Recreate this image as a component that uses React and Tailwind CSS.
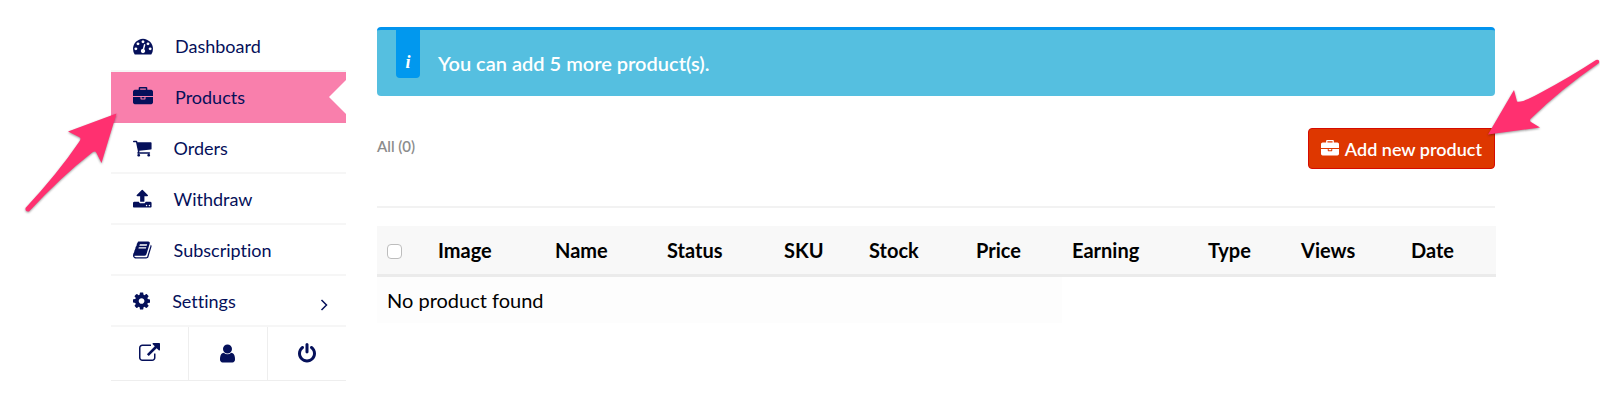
const ICONS = {
  dashboard: {
    viewBox: "0 0 1792 1792",
    d: "M384 1152q0-53-37.5-90.5t-90.5-37.5-90.5 37.5-37.5 90.5 37.5 90.5 90.5 37.5 90.5-37.5 37.5-90.5zm192-448q0-53-37.5-90.5t-90.5-37.5-90.5 37.5-37.5 90.5 37.5 90.5 90.5 37.5 90.5-37.5 37.5-90.5zm428 481l101-382q6-26-7.5-48.5t-38.5-29.5-48 6.5-30 39.5l-101 382q-60 5-107 43.5t-63 98.5q-20 77 20 146t117 89 146-20 89-117q16-60-6-117t-72-91zm660-33q0-53-37.5-90.5t-90.5-37.5-90.5 37.5-37.5 90.5 37.5 90.5 90.5 37.5 90.5-37.5 37.5-90.5zm-640-640q0-53-37.5-90.5t-90.5-37.5-90.5 37.5-37.5 90.5 37.5 90.5 90.5 37.5 90.5-37.5 37.5-90.5zm448 192q0-53-37.5-90.5t-90.5-37.5-90.5 37.5-37.5 90.5 37.5 90.5 90.5 37.5 90.5-37.5 37.5-90.5zm320 448q0 261-141 483-19 29-54 29h-1402q-35 0-54-29-141-221-141-483 0-182 71-348t191-286 286-191 348-71 348 71 286 191 191 286 71 348z",
  },
  briefcase: {
    viewBox: "0 0 1792 1792",
    d: "M640 256h512v-128h-512v128zm1152 640v480q0 66-47 113t-113 47h-1472q-66 0-113-47t-47-113v-480h672v160q0 26 19 45t45 19h320q26 0 45-19t19-45v-160h672zm-768 0v128h-256v-128h256zm768-480v384h-1792v-384q0-66 47-113t113-47h352v-160q0-40 28-68t68-28h576q40 0 68 28t28 68v160h352q66 0 113 47t47 113z",
  },
  cart: {
    viewBox: "64 0 1664 1792",
    d: "M704 1536q0 52-38 90t-90 38-90-38-38-90 38-90 90-38 90 38 38 90zm896 0q0 52-38 90t-90 38-90-38-38-90 38-90 90-38 90 38 38 90zm128-1088v512q0 24-16.5 42.5t-40.5 21.5l-1044 122q13 60 13 70 0 16-24 64h920q26 0 45 19t19 45-19 45-45 19h-1024q-26 0-45-19t-19-45q0-11 8-31.5t16-36 21.5-40 15.5-29.5l-177-823h-204q-26 0-45-19t-19-45 19-45 45-19h256q16 0 28.5 6.5t19.5 15.5 13 24.5 8 26 5.5 29.5 4.5 26h1201q26 0 45 19t19 45z",
  },
  upload: {
    viewBox: "64 0 1664 1792",
    d: "M1344 1472q0-26-19-45t-45-19-45 19-19 45 19 45 45 19 45-19 19-45zm256 0q0-26-19-45t-45-19-45 19-19 45 19 45 45 19 45-19 19-45zm128-224v320q0 40-28 68t-68 28h-1472q-40 0-68-28t-28-68v-320q0-40 28-68t68-28h427q21 56 70.5 92t110.5 36h256q61 0 110.5-36t70.5-92h427q40 0 68 28t28 68zm-325-648q-17 40-59 40h-256v448q0 26-19 45t-45 19h-256q-26 0-45-19t-19-45v-448h-256q-42 0-59-40-17-39 14-69l448-448q18-19 45-19t45 19l448 448q31 30 14 69z",
  },
  book: {
    viewBox: "64 0 1664 1792",
    d: "M1703 478q40 57 18 129l-275 906q-19 64-76.5 107.5t-122.5 43.5h-923q-77 0-148.5-53.5t-99.5-131.5q-24-67-2-127 0-4 3-27t4-37q1-8-3-21.5t-3-19.5q2-11 8-21t16.5-23.5 16.5-23.5q23-38 45-91.5t30-91.5q3-10 .5-30t-.5-28q3-11 17-28t17-23q21-36 42-92t25-90q1-9-2.5-32t.5-28q4-13 22-30.5t22-22.5q19-26 42.5-84.5t27.5-96.5q1-8-3-25.5t-2-26.5q2-8 9-18t18-23 17-21q8-12 16.5-30.5t15-35 16-36 19.5-32 26.5-23.5 36-11.5 47.5 5.5l-1 3q38-9 51-9h761q74 0 114 56t18 130l-274 906q-36 119-71.5 153.5t-128.5 34.5h-869q-27 0-38 15-11 16-1 43 24 70 144 70h923q29 0 56-15.5t35-41.5l300-987q7-22 5-57 38 15 59 43zm-1064 2q-4 13 2 22.5t20 9.5h608q13 0 25.5-9.5t16.5-22.5l21-64q4-13-2-22.5t-20-9.5h-608q-13 0-25.5 9.5t-16.5 22.5zm-83 256q-4 13 2 22.5t20 9.5h608q13 0 25.5-9.5t16.5-22.5l21-64q4-13-2-22.5t-20-9.5h-608q-13 0-25.5 9.5t-16.5 22.5z",
  },
  cog: {
    viewBox: "128 0 1536 1792",
    d: "M1152 896q0-106-75-181t-181-75-181 75-75 181 75 181 181 75 181-75 75-181zm512-109v222q0 12-8 23t-20 13l-185 28q-19 54-39 91 35 50 107 138 10 12 10 25t-9 23q-27 37-99 108t-94 71q-12 0-26-9l-138-108q-44 23-91 38-16 136-29 186-7 28-36 28h-222q-14 0-24.5-8.5t-11.5-21.5l-28-184q-49-16-90-37l-141 107q-10 9-25 9-14 0-25-11-126-114-165-168-7-10-7-23 0-12 8-23 15-21 51-66.5t54-70.5q-27-50-41-99l-183-27q-13-2-21-12.5t-8-23.5v-222q0-12 8-23t19-13l186-28q14-46 39-92-40-57-107-138-10-12-10-24 0-10 9-23 26-36 98.5-107.5t94.5-71.5q13 0 26 10l138 107q44-23 91-38 16-136 29-186 7-28 36-28h222q14 0 24.5 8.5t11.5 21.5l28 184q49 16 90 37l142-107q9-9 24-9 13 0 25 10 129 119 165 170 7 8 7 22 0 12-8 23-15 21-51 66.5t-54 70.5q26 50 41 98l183 28q13 2 21 12.5t8 23.5z",
  },
  external: {
    viewBox: "0 0 1792 1792",
    d: "M1408 928v320q0 119-84.5 203.5t-203.5 84.5h-832q-119 0-203.5-84.5t-84.5-203.5v-832q0-119 84.5-203.5t203.5-84.5h704q14 0 23 9t9 23v64q0 14-9 23t-23 9h-704q-66 0-113 47t-47 113v832q0 66 47 113t113 47h832q66 0 113-47t47-113v-320q0-14 9-23t23-9h64q14 0 23 9t9 23zm384-864v512q0 26-19 45t-45 19-45-19l-176-176-652 652q-10 10-23 10t-23-10l-114-114q-10-10-10-23t10-23l652-652-176-176q-19-19-19-45t19-45 45-19h512q26 0 45 19t19 45z",
  },
  user: {
    viewBox: "256 0 1280 1792",
    d: "M1536 1399q0 109-62.5 187t-150.5 78h-854q-88 0-150.5-78t-62.5-187q0-85 8.5-160.5t31.5-152 58.5-131 94-89 134.5-34.5q131 128 313 128t313-128q76 0 134.5 34.5t94 89 58.5 131 31.5 152 8.5 160.5zm-256-887q0 159-112.5 271.5t-271.5 112.5-271.5-112.5-112.5-271.5 112.5-271.5 271.5-112.5 271.5 112.5 112.5 271.5z",
  },
  power: {
    viewBox: "128 0 1536 1792",
    d: "M1664 896q0 156-61 298t-164 245-245 164-298 61-298-61-245-164-164-245-61-298q0-182 80.5-343t226.5-270q43-32 95.5-25t83.5 50q32 42 24.5 94.5t-49.5 84.5q-98 74-151.5 181t-53.5 228q0 104 40.5 198.5t109.5 163.5 163.5 109.5 198.5 40.5 198.5-40.5 163.5-109.5 109.5-163.5 40.5-198.5q0-121-53.5-228t-151.5-181q-42-32-49.5-84.5t24.5-94.5q31-43 84-50t95 25q146 109 226.5 270t80.5 343zm-640-768v640q0 52-38 90t-90 38-90-38-38-90v-640q0-52 38-90t90-38 90 38 38 90z",
  },
};

const menu = [
  { label: "Dashboard", icon: "dashboard" },
  { label: "Products", icon: "briefcase", active: true },
  { label: "Orders", icon: "cart" },
  { label: "Withdraw", icon: "upload" },
  { label: "Subscription", icon: "book" },
  { label: "Settings", icon: "cog", submenu: true },
];

const shortcuts = [
  { label: "Visit store", icon: "external" },
  { label: "Edit account", icon: "user" },
  { label: "Log out", icon: "power" },
];

const columns = [
  { label: "Image", width: "w-[117px]" },
  { label: "Name", width: "w-[112px]" },
  { label: "Status", width: "w-[117px]" },
  { label: "SKU", width: "w-[85px]" },
  { label: "Stock", width: "w-[107px]" },
  { label: "Price", width: "w-[96px]" },
  { label: "Earning", width: "w-[136px]" },
  { label: "Type", width: "w-[93px]" },
  { label: "Views", width: "w-[110px]" },
  { label: "Date", width: "w-[95px]" },
];

function Icon({ name, className }) {
  return (
    <svg
      className={className}
      viewBox={ICONS[name].viewBox}
      fill="currentColor"
      aria-hidden="true"
    >
      <path d={ICONS[name].d} />
    </svg>
  );
}

function Sidebar() {
  return (
    <nav className="w-[235px] shrink-0 text-[#05105a]">
      <ul>
        {menu.map((item) => (
          <li key={item.label}>
            <a
              href="#"
              className={`relative flex h-[51px] items-center border-b-2 pl-[22px] text-lg ${
                item.active
                  ? "border-[#f77fab] bg-[#f97fac]"
                  : "border-[#f6f6f6]"
              }`}
            >
              <Icon name={item.icon} className="mr-[22px] h-5 w-auto" />
              <span>{item.label}</span>
              {item.active && (
                <svg
                  className="absolute top-2 right-0 h-[34px] w-[17px]"
                  viewBox="0 0 17 34"
                  aria-hidden="true"
                >
                  <path d="M17 0L0 17l17 17z" fill="#fff" />
                </svg>
              )}
              {item.submenu && (
                <svg
                  className="mt-2 mr-[18px] ml-auto h-3 w-2"
                  viewBox="0 0 8 12"
                  fill="none"
                  stroke="currentColor"
                  strokeWidth="1.5"
                  aria-hidden="true"
                >
                  <path d="M1.5 1L6.5 6l-5 5" />
                </svg>
              )}
            </a>
          </li>
        ))}
      </ul>
      <div className="grid grid-cols-3 divide-x divide-[#eeeeee] border-b border-[#eeeeee]">
        {shortcuts.map((item) => (
          <a
            key={item.label}
            href="#"
            aria-label={item.label}
            className="flex h-[53px] items-center justify-center"
          >
            <Icon name={item.icon} className="h-[21px] w-auto" />
          </a>
        ))}
      </div>
    </nav>
  );
}

export default function App() {
  return (
    <div className="relative flex gap-[31px] bg-white pt-[21px] pr-[105px] pl-[111px] font-['Lato',sans-serif] [font-variant-ligatures:none]">
      <Sidebar />

      <main className="min-w-0 flex-1 pt-[6px]">
        <div
          role="status"
          className="flex h-[69px] rounded-sm border-t-[3px] border-[#0294ee] bg-[#55bfe0] pl-[19px] text-xl font-semibold text-white"
        >
          <span className="flex h-12 w-6 items-end justify-center rounded-b bg-[#0198ee] pb-[2px] font-['Liberation_Serif',serif] text-lg font-bold italic">
            i
          </span>
          <p className="pt-[19px] pl-[18px]">You can add 5 more product(s).</p>
        </div>

        <div className="mt-8 flex items-start justify-between border-b-2 border-[#f2f2f2] pb-[37px]">
          <a href="#" className="pt-[7px] text-[15px] font-semibold text-[#8c8c8c]">
            All (0)
          </a>
          <button
            type="button"
            className="flex h-[41px] items-center gap-[6px] rounded border border-[#d60a00] bg-[#de3700] px-3 text-lg font-semibold text-white"
          >
            <Icon name="briefcase" className="h-[18px] w-auto" />
            Add new product
          </button>
        </div>

        <table className="mt-[18px] w-full table-fixed text-left text-xl text-black">
          <thead>
            <tr className="h-[49px] border-b-[3px] border-[#ebebeb] bg-[#f8f8f8]">
              <th className="w-[51px] pl-[10px]">
                <input
                  type="checkbox"
                  aria-label="Select all products"
                  className="mt-1 block size-[15px] appearance-none rounded border border-[#bdbdbd] bg-white"
                />
              </th>
              {columns.map((column) => (
                <th
                  key={column.label}
                  scope="col"
                  className={`${column.width} pl-[10px] font-bold`}
                >
                  {column.label}
                </th>
              ))}
            </tr>
          </thead>
          <tbody>
            <tr className="h-12">
              <td colSpan={7} className="bg-[#fdfdfd] pl-[10px]">
                No product found
              </td>
            </tr>
          </tbody>
        </table>
      </main>

      {/* pointers to the Products item and the add button */}
      <svg
        className="pointer-events-none absolute top-[110px] left-5 h-[105px] w-[100px] drop-shadow-[0_1px_1px_rgba(0,0,0,0.4)]"
        viewBox="20 110 100 105"
        aria-hidden="true"
      >
        <path
          d="M116.5 113.5L68 131.5L79 137Q82 138 79 142Q58 173 25.5 208Q25 212 29 211.5Q62 176 91 153.5Q95 150 96.5 153L101.5 163z"
          fill="#ff3070"
        />
      </svg>
      <svg
        className="pointer-events-none absolute top-[55px] right-0 h-[85px] w-[115px] drop-shadow-[0_1px_1px_rgba(0,0,0,0.4)]"
        viewBox="1485 55 115 85"
        aria-hidden="true"
      >
        <path
          d="M1488 134.5L1514 90L1517 101.5Q1522 103 1540 93Q1570 77 1596 60Q1600 59 1599 63Q1560 90 1531 118.5Q1529 120 1531 122L1540 127.5z"
          fill="#ff3070"
        />
      </svg>
    </div>
  );
}
